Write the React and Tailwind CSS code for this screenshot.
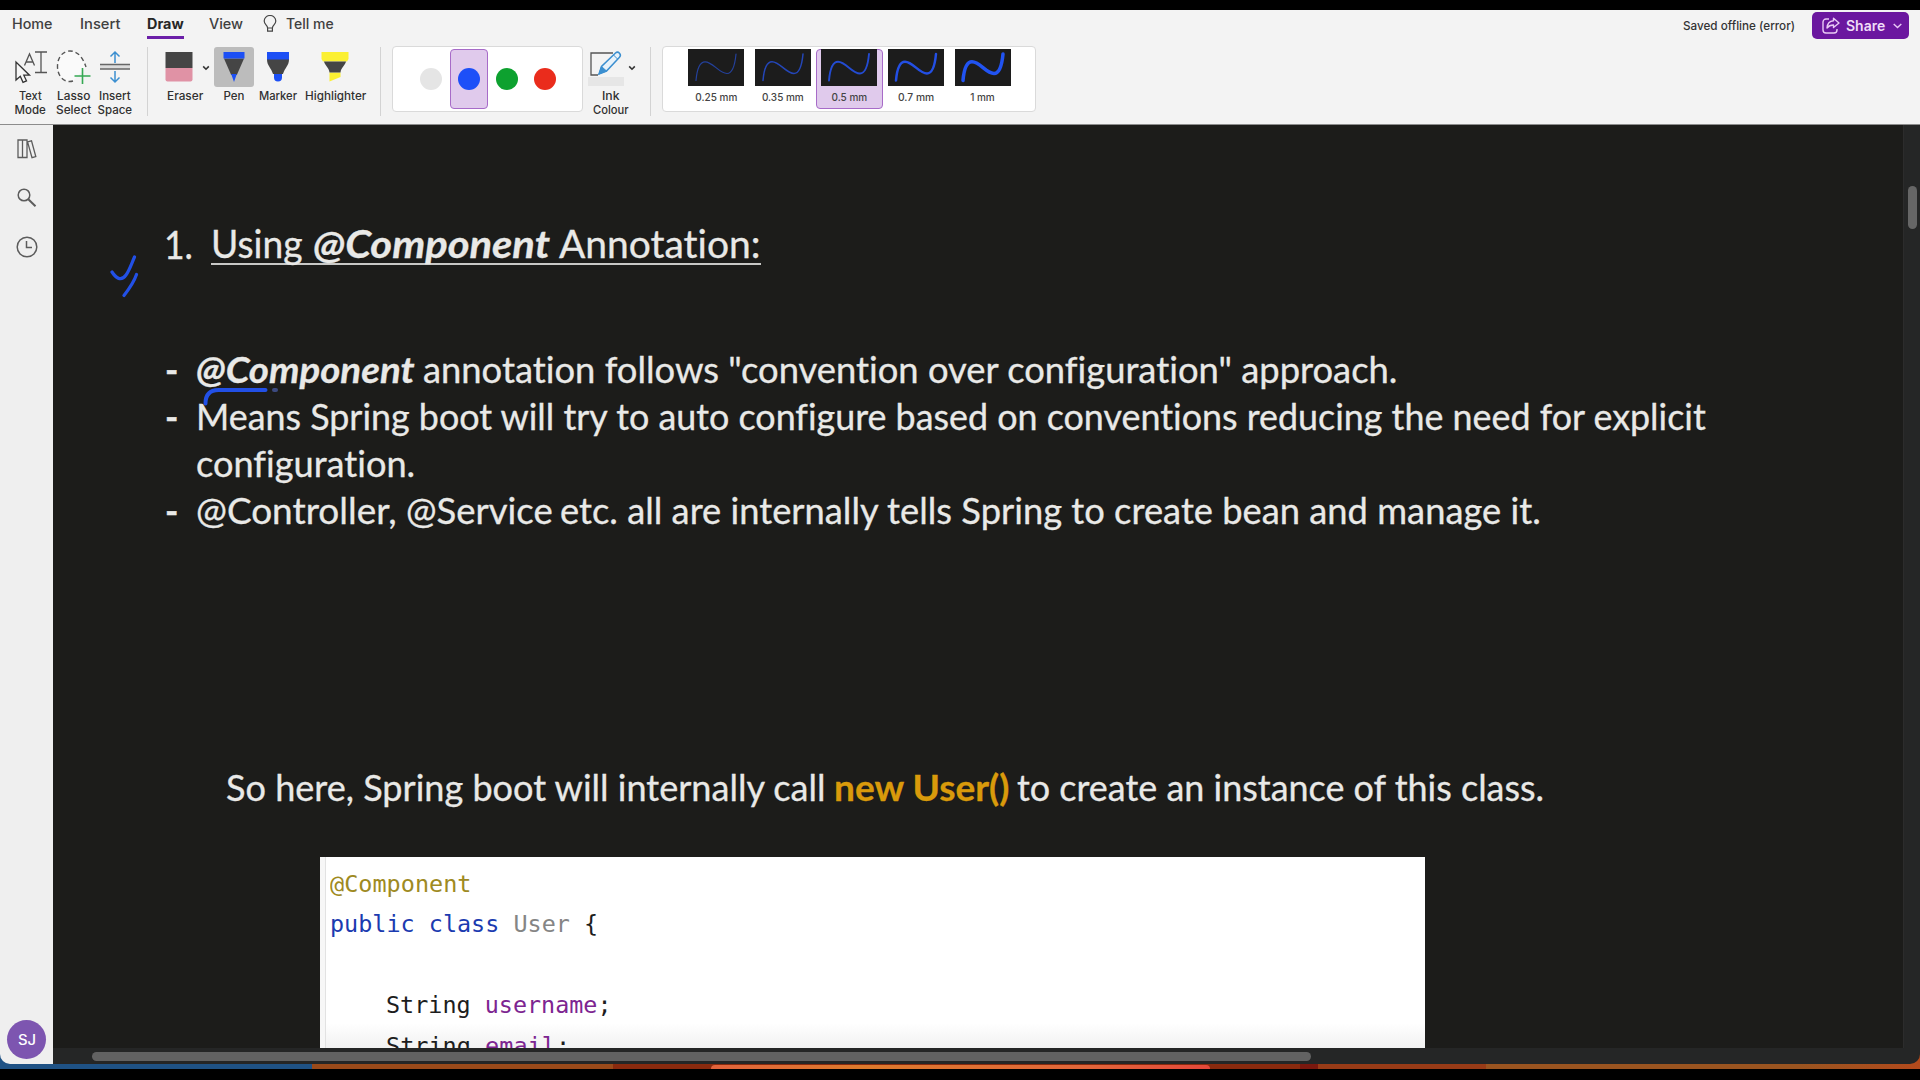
import { useLayoutEffect, useRef } from "react";

const UI = "font-['Inter',sans-serif]";
const NOTE = "font-['Lato',sans-serif]";

/* Text run condensed or widened to a fixed advance width. */
function Fit({ w, className = "", children }) {
  const ref = useRef(null);
  useLayoutEffect(() => {
    const el = ref.current;
    const apply = () => {
      el.style.transform = `scaleX(${w / el.offsetWidth})`;
    };
    apply();
    document.fonts?.ready.then(apply);
  }, [w]);
  return (
    <span className="inline-block shrink-0 whitespace-pre text-left" style={{ width: w }}>
      <span ref={ref} className={`inline-block origin-left whitespace-pre ${className}`}>
        {children}
      </span>
    </span>
  );
}

function Divider() {
  return <div className="h-[69px] w-px shrink-0 bg-[#d3d3d3]" />;
}

function Caret() {
  return (
    <svg width="8" height="6" viewBox="0 0 8 6" fill="none" stroke="#333" strokeWidth="1.6">
      <path d="M1.2 1.4 4 4.2 6.8 1.4" />
    </svg>
  );
}

function Tool({ icon, lines, className = "", labelClass = "" }) {
  return (
    <div className={`flex shrink-0 flex-col items-center ${className}`}>
      <div className="flex h-[40px] w-[40px] items-center justify-center">{icon}</div>
      <div className={`mt-[3px] flex flex-col items-center text-[11.5px] leading-[13.5px] font-medium text-[#303030] ${labelClass}`}>
        {lines.map(([t, w]) => (
          <Fit key={t} w={w}>{t}</Fit>
        ))}
      </div>
    </div>
  );
}

const TextModeIcon = (
  <svg width="34" height="34" viewBox="0 0 34 34" fill="none" stroke="#555" strokeWidth="1.3" className="shrink-0">
    <path d="M11.5 15.5 16.5 4l5 11.5M13.2 12h6.6" />
    <path d="M22 2h12M22 22.500h12M28 2v20.500" />
    <path d="M3 12v18l4.300-3.700 2.700 6 3.500-1.500-2.700-5.600h5.700z" fill="#f7f7f7" stroke="#333" />
  </svg>
);

const LassoIcon = (
  <svg width="36" height="36" viewBox="0 0 36 36" fill="none" className="shrink-0">
    <path d="M18 32C9 34.500 2.500 27 2.500 17.500S8 2 15 2c8 0 13 7 16 16" fill="#fafafa" stroke="#555" strokeWidth="1.400" strokeDasharray="4.500 3" />
    <path d="M27.500 19v16M19.500 27h16" stroke="#35a853" strokeWidth="1.600" />
  </svg>
);

const InsertSpaceIcon = (
  <svg width="32" height="34" viewBox="0 0 32 34" fill="none" className="shrink-0">
    <path d="M1 14.500h30v4.500H1z" fill="#dcdcdc" />
    <path d="M1 14.500h30M1 19h30" stroke="#666" strokeWidth="1.300" />
    <path d="M16 13V2M11.500 6.500 16 2l4.500 4.500M16 21V32M11.500 27.500 16 32l4.500-4.500" stroke="#3b8fd0" strokeWidth="1.500" />
  </svg>
);

const EraserIcon = (
  <svg width="28" height="30" viewBox="0 0 28 30" className="shrink-0">
    <path d="M.5 0h27v16H.5z" fill="#454545" />
    <path d="M.5 16h27v11.500a2 2 0 0 1-2 2h-23a2 2 0 0 1-2-2z" fill="#e092a5" />
  </svg>
);

const PenIcon = (
  <svg width="22" height="30" viewBox="0 0 22 30" className="shrink-0">
    <path d="M1 6.500h20L13.800 23H8.200z" fill="#454545" />
    <path d="M.5 0h21v6.500H.5zM8.200 22h5.600L11 30z" fill="#1c4ff5" />
  </svg>
);

const MarkerIcon = (
  <svg width="24" height="30" viewBox="0 0 24 30" className="shrink-0">
    <path d="M8 21h8v4.500a4 4 0 0 1-8 0zM1 0h22v8H1z" fill="#1c4ff5" />
    <path d="M1 7.500h22c0 6-4 8-6 14.500H7C5 15.500 1 13.500 1 7.500z" fill="#454545" />
  </svg>
);

const HighlighterIcon = (
  <svg width="28" height="30" viewBox="0 0 28 30" className="shrink-0">
    <path d="M.5 0h27v7l-1.500 2.500H2L.5 7zM8.500 20.500h11v4.500l-11 4.500z" fill="#fbf032" />
    <path d="M3 9.500h22c-1 4-5 6-5.500 11h-11C8 15.500 4 13.500 3 9.500z" fill="#454545" />
  </svg>
);

function Ribbon() {
  return (
    <header className={`${UI} flex h-[115px] shrink-0 flex-col border-b border-[#8c8c8c] bg-[#f3f3f3]`}>
      <div className="flex h-[30px] items-start">
        <nav className="flex pl-[12px] pt-[4px] text-[14px] leading-[20px] font-medium text-[#404040]">
          <Fit w={41}>Home</Fit>
          <span className="ml-[27px]"><Fit w={40}>Insert</Fit></span>
          <span className="ml-[27px] flex h-[25px] flex-col border-b-[3px] border-[#6b1fa8] font-bold text-[#262626]">
            <Fit w={37}>Draw</Fit>
          </span>
          <span className="ml-[25px]"><Fit w={34}>View</Fit></span>
          <svg className="ml-[20px] mt-px" width="14" height="18" viewBox="0 0 14 18" fill="none" stroke="#444" strokeWidth="1.200">
            <path d="M4.600 13C4.600 10 1.200 9.500 1.200 6a5.800 5.500 0 0 1 11.600 0c0 3.500-3.400 4-3.400 7zM4.600 13v3.200h4.800V13" />
          </svg>
          <span className="ml-[9px]"><Fit w={48}>Tell me</Fit></span>
        </nav>
        <div className="ml-auto flex items-start pr-[11px]">
          <div className="pt-[7px] text-[12px] leading-[18px] font-medium text-[#333]">
            <Fit w={112}>Saved offline (error)</Fit>
          </div>
          <button className="ml-[17px] mt-[2px] flex h-[27px] w-[97px] items-center rounded-[5px] bg-[#6b179f] pl-[10px] text-[14px] font-semibold text-[#f0ddf8]">
            <svg width="18" height="17" viewBox="0 0 18 17" fill="none" stroke="#e9c9f5" strokeWidth="1.400" strokeLinejoin="round">
              <path d="M7 2H4a3 3 0 0 0-3 3v8a3 3 0 0 0 3 3h8a3 3 0 0 0 3-3v-1" />
              <path d="M11.500 1.200 17 6l-5.500 4.500V8C8.500 8 6.500 9 5 11c.3-4 2.500-7 6.500-7.300z" />
            </svg>
            <span className="ml-[6px]"><Fit w={39}>Share</Fit></span>
            <svg className="ml-[8px]" width="9" height="6" viewBox="0 0 9 6" fill="none" stroke="#e9c9f5" strokeWidth="1.400">
              <path d="M.7 1 4.500 4.600 8.300 1" />
            </svg>
          </button>
        </div>
      </div>

      <div className="flex items-start pt-[7px]">
        <div className="flex items-start pl-[10px]">
          <Tool className="w-[40px]" icon={TextModeIcon} lines={[["Text", 23], ["Mode", 31]]} />
          <Tool className="ml-[3px] w-[40px]" icon={LassoIcon} lines={[["Lasso", 33], ["Select", 35]]} />
          <Tool className="ml-[2px] w-[40px]" icon={InsertSpaceIcon} lines={[["Insert", 32], ["Space", 35]]} />
        </div>
        <div className="ml-[12px]"><Divider /></div>
        <Tool className="ml-[11px] w-[40px]" icon={EraserIcon} lines={[["Eraser", 36]]} labelClass="pl-[11px]" />
        <div className="ml-[3px] mt-[18px]"><Caret /></div>
        <div className="ml-[4px] flex">
          <Tool className="w-[40px]" icon={<span className="flex h-[40px] w-[40px] items-center justify-center rounded-[3px] bg-[#bcbcbc]">{PenIcon}</span>} lines={[["Pen", 21]]} />
          <Tool className="ml-[4px] w-[40px]" icon={MarkerIcon} lines={[["Marker", 38]]} />
          <Tool className="ml-[6px] w-[62px]" icon={HighlighterIcon} lines={[["Highlighter", 61]]} />
        </div>
        <div className="ml-[14px]"><Divider /></div>

        <div className="-mt-px ml-[11px] flex h-[66px] w-[191px] items-center rounded-[4px] border border-[#dadada] bg-white pl-[19px]">
          <div className="flex h-[60px] w-[38px] items-center justify-center"><i className="size-[22px] rounded-full bg-[#e5e5e5]" /></div>
          <div className="flex h-[60px] w-[38px] items-center justify-center rounded-[4px] border border-[#a76bc8] bg-[#e0caec]"><i className="size-[22px] rounded-full bg-[#1d4ff8]" /></div>
          <div className="flex h-[60px] w-[38px] items-center justify-center"><i className="size-[22px] rounded-full bg-[#0da12f]" /></div>
          <div className="flex h-[60px] w-[38px] items-center justify-center"><i className="size-[22px] rounded-full bg-[#ea2c1c]" /></div>
        </div>

        <div className="flex w-[46px] flex-col items-center">
          <div className="flex h-[40px] w-[38px] flex-col">
            <svg width="38" height="30" viewBox="0 0 38 30" fill="none">
              <path d="M26 6H4v22h7" stroke="#555" strokeWidth="1.300" />
              <path d="m12 27 2.500-7.500L28.500 6c1.500-1.300 3-.8 4 .3s1.300 2.600 0 4L19.500 24z" fill="#e8f2fa" stroke="#3b8fd0" strokeWidth="1.500" />
              <path d="m12 27 2.500-7.500 5 4.500zM26.500 8l4 4" fill="#3b8fd0" stroke="#3b8fd0" />
            </svg>
            <div className="ml-px h-[9px] w-[36px] bg-[#e6e6e6]" />
          </div>
          <div className="mt-[3px] flex flex-col items-center pl-[9px] text-[11.5px] leading-[13.5px] font-medium text-[#303030]">
            <Fit w={17}>Ink</Fit>
            <Fit w={36}>Colour</Fit>
          </div>
        </div>
        <div className="-ml-px mt-[18px]"><Caret /></div>
        <div className="ml-[14px]"><Divider /></div>

        <div className="-mt-px ml-[11px] flex h-[66px] w-[374px] rounded-[4px] border border-[#dadada] bg-white pl-[20px] pt-[2px]">
          {[["0.25 mm", 42, 1.2, "#24419c"], ["0.35 mm", 42, 1.5, "#2446b8"], ["0.5 mm", 36, 1.9, "#234bd2"], ["0.7 mm", 36, 2.5, "#234fe4"], ["1 mm", 25, 3.5, "#2153f2"]].map(([label, w, sw, color], i) => (
            <div
              key={label}
              className={
                i === 2
                  ? "flex h-[60px] w-[66.600px] flex-col items-center rounded-[4px] border border-[#a76bc8] bg-[#e0caec]"
                  : "flex h-[60px] w-[66.600px] flex-col items-center border border-transparent"
              }
            >
              <svg width="56" height="37" viewBox="0 0 56 37" className="-mt-px bg-[#1c1c1c]">
                <path d="M8 31.500C9 20 12 12.800 17 12.800c8 0 14 11.700 22 11.700 6 0 8-9 9-19.500" fill="none" stroke={color} strokeWidth={sw} strokeLinecap="round" />
              </svg>
              <div className="mt-[4px] text-[10px] leading-[14px] font-medium text-[#444]"><Fit w={w}>{label}</Fit></div>
            </div>
          ))}
        </div>
      </div>
    </header>
  );
}

function Sidebar() {
  return (
    <aside className={`${UI} flex w-[53px] shrink-0 flex-col items-center rounded-bl-[10px] bg-[#efefef] pb-[5px]`}>
      <svg className="mt-[14px]" width="20" height="20" viewBox="0 0 20 20" fill="none" stroke="#5c5c5c" strokeWidth="1.300">
        <path d="M1 1h4.500v17.500H1zM5.500 1H10v17.500H5.500zM10.500 2.800l4-1 4.300 15.800-3.800 1z" />
      </svg>
      <svg className="mt-[29px]" width="20" height="20" viewBox="0 0 20 20" fill="none" stroke="#5c5c5c">
        <circle cx="7" cy="7" r="5.800" strokeWidth="1.500" />
        <path d="m11.300 11.300 7.200 7" strokeWidth="2" />
      </svg>
      <svg className="mt-[28px]" width="22" height="22" viewBox="0 0 22 22" fill="none" stroke="#5c5c5c" strokeWidth="1.500">
        <circle cx="11" cy="11" r="9.800" />
        <path d="M10.500 5v6.500H16" />
      </svg>
      <div className="mt-auto flex size-[39px] items-center justify-center rounded-full bg-[#7d55b0] text-[14px] font-medium text-white">
        <Fit w={18}>SJ</Fit>
      </div>
    </aside>
  );
}

function Bullet({ children }) {
  return (
    <div className="flex h-[47.200px] items-center">
      <span className="w-[31px] shrink-0"><Fit w={13} className="font-bold">-</Fit></span>
      {children}
    </div>
  );
}

function Canvas() {
  return (
    <main className={`${NOTE} relative flex min-w-0 grow flex-col overflow-hidden bg-[#1c1c1a] text-[36px] text-[#e9e9e7] [font-variant-ligatures:none]`}>
      <div className="flex flex-col [-webkit-text-stroke:0.300px_currentColor]">
        <div className="mt-[95px] flex h-[48px] items-center pl-[111px] text-[38px]">
          <span className="w-[47px] shrink-0"><Fit w={29}>1.</Fit></span>
          <span className="flex h-[42px] items-center border-b-[2.500px] border-[#c8c8c6]">
            <Fit w={92}>Using</Fit>
            <span className="w-[10px]" />
            <Fit w={237} className="font-bold italic">@Component</Fit>
            <span className="w-[9px]" />
            <Fit w={202}>Annotation:</Fit>
          </span>
        </div>

        <div className="mt-[77px] flex flex-col pl-[112px]">
          <Bullet>
            <Fit w={219} className="font-bold italic">@Component</Fit>
            <span className="w-[8px]" />
            <Fit w={974}>annotation follows "convention over configuration" approach.</Fit>
          </Bullet>
          <Bullet><Fit w={1510}>Means Spring boot will try to auto configure based on conventions reducing the need for explicit</Fit></Bullet>
          <div className="flex h-[47.200px] items-center pl-[31px]"><Fit w={219}>configuration.</Fit></div>
          <Bullet>
            <Fit w={201}>@Controller,</Fit>
            <span className="w-[9px]" />
            <Fit w={147}>@Service</Fit>
            <span className="w-[7px]" />
            <Fit w={981}>etc. all are internally tells Spring to create bean and manage it.</Fit>
          </Bullet>
        </div>

        <div className="mt-[229px] flex h-[48px] items-center pl-[173px]">
          <Fit w={600}>So here, Spring boot will internally call</Fit>
          <span className="w-[8px]" />
          <Fit w={175} className="font-bold text-[#d99a0b]">new User()</Fit>
          <span className="w-[8px]" />
          <Fit w={527}>to create an instance of this class.</Fit>
        </div>
      </div>

      <div className="ml-[267px] mt-[46px] flex h-[192px] w-[1105px] shrink-0 overflow-hidden bg-white font-['DejaVu_Sans_Mono',monospace] text-[23px] leading-[40.500px] text-[#1d1d1d]">
        <div className="w-[6px] shrink-0 border-r border-[#e2e2e2] bg-[#f7f7f7]" />
        <div className="flex grow flex-col bg-[linear-gradient(to_top,#f1f1f1,#ffffff_26px)] pl-[4px] pt-[7px]">
          <div className="h-[40.500px] shrink-0"><Fit w={141} className="text-[#9e8a22]">@Component</Fit></div>
          <div className="h-[40.500px] shrink-0"><Fit w={268}><span className="text-[#1b3bb0]">public class</span> <span className="text-[#858585]">User</span> {"{"}</Fit></div>
          <div className="h-[40.500px] shrink-0" />
          <div className="h-[40.500px] shrink-0 pl-[56px]"><Fit w={226}>String <span className="text-[#7d2591]">username</span>;</Fit></div>
          <div className="h-[40.500px] shrink-0 pl-[56px]"><Fit w={184}>String <span className="text-[#7d2591]">email</span>;</Fit></div>
        </div>
      </div>

      <svg className="absolute left-[57px] top-[130px]" width="30" height="44" viewBox="0 0 30 44" fill="none" stroke="#2250e6" strokeWidth="3.200" strokeLinecap="round">
        <path d="M2 17c4 6 9 10 14 3 3.500-5 5-10 8.500-18M14 40.500C19 34 24 27 26.500 19.500" />
      </svg>
      <svg className="absolute left-[150px] top-[261px]" width="80" height="20" viewBox="0 0 80 20" fill="none" stroke="#2250e6" strokeWidth="4" strokeLinecap="round">
        <path d="M2.500 17.500c0-10 5-13.500 13-13.500h47" />
        <path d="M71 4h2" stroke="#3c4a80" />
      </svg>
    </main>
  );
}

export default function App() {
  return (
    <div className="flex h-[1080px] w-[1920px] flex-col overflow-hidden bg-black pt-[10px] pb-[11px]">
      <div className="flex min-h-0 grow flex-col bg-[linear-gradient(to_right,#1f5285_0_312px,#9a4a1a_312px_613px,#8a2a0e_613px_1300px,#7a180e_1300px_1318px,#983b17_1318px_1486px,#9a5420_1486px_1800px,#b34a1c)]">
        <Ribbon />
        <div className="flex min-h-0 grow">
          <Sidebar />
          <div className="flex min-w-0 grow flex-col overflow-hidden rounded-br-[10px] bg-[#252626]">
            <div className="flex min-h-0 grow">
              <Canvas />
              <div className="w-[17px] shrink-0 border-l border-[#2c2c2c] pl-[4px] pt-[61px]">
                <div className="h-[43px] w-[9px] rounded-full bg-[#666]" />
              </div>
            </div>
            <div className="h-[16px] shrink-0 pl-[39px] pt-[4px]">
              <div className="h-[9px] w-[1219px] rounded-full bg-[#626262]" />
            </div>
          </div>
        </div>
        <div className="flex h-[5px] shrink-0 items-end pl-[711px]">
          <div className="h-[4px] w-[499px] rounded-t-[6px] bg-[linear-gradient(to_right,#e2633c,#dd7a2c_30%,#e2663a_75%,#e5483a)]" />
        </div>
      </div>
    </div>
  );
}
